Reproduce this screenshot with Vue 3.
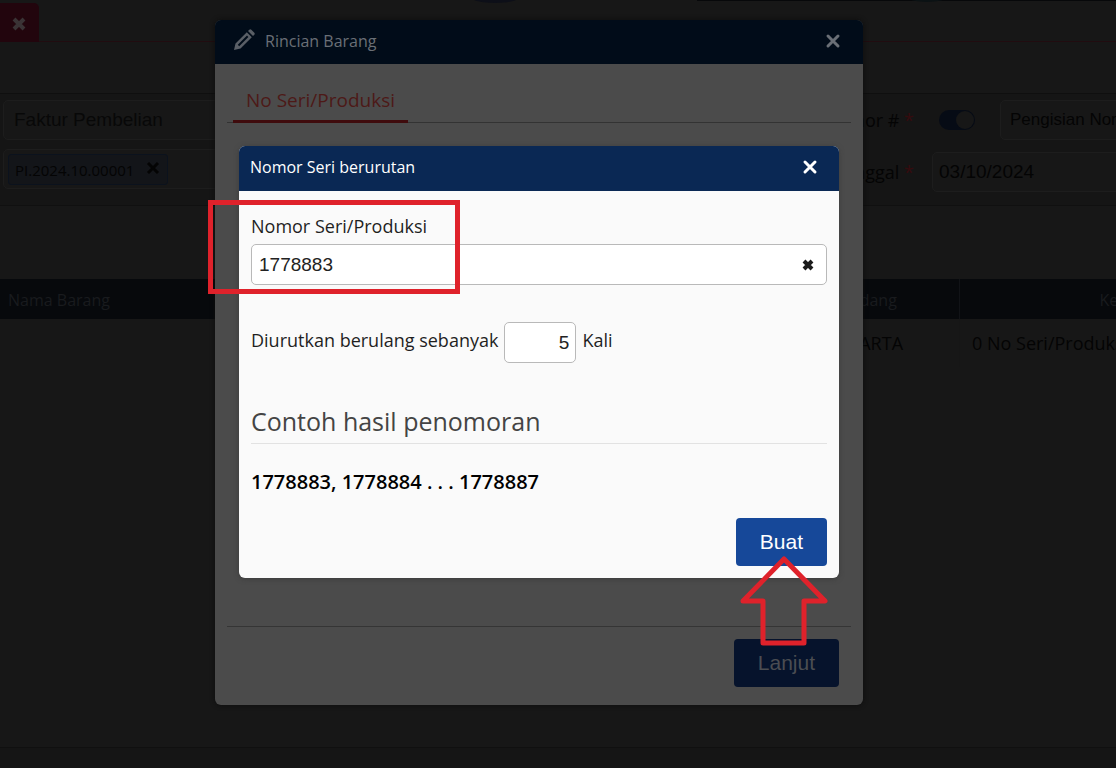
<script setup>
import { computed, ref } from 'vue'

const serial = ref('1778883')
const count = ref('5')

const sample = computed(() => {
  const first = Number(serial.value)
  const total = Number(count.value)
  return `${first}, ${first + 1} . . . ${first + total - 1}`
})
</script>

<template>
  <div class="app">
    <div class="page">
      <header class="topbar">
        <svg class="topbar-art" width="645" height="4" viewBox="0 0 645 4" aria-hidden="true">
          <ellipse cx="24" cy="-3" rx="24" ry="6" fill="#0d0f18" />
          <rect x="226" y="0" width="419" height="1" fill="#07080a" />
          <ellipse cx="456" cy="-3" rx="20" ry="5" fill="#0b1214" />
        </svg>
        <button class="page-tab" aria-label="Tutup tab">
          <svg width="16" height="16" viewBox="0 0 16 16"><path d="M3 3l10 10M13 3L3 13" /></svg>
        </button>
      </header>
      <div class="toolbar"></div>
      <section class="form">
        <div class="form-left">
          <input class="field source" aria-label="Faktur Pembelian" placeholder="Faktur Pembelian" />
          <div class="field tags">
            <span class="tag">
              PI.2024.10.00001
              <button aria-label="Hapus PI.2024.10.00001">
                <svg width="16" height="16" viewBox="0 0 16 16"><path d="M3 3l10 10M13 3L3 13" /></svg>
              </button>
            </span>
          </div>
        </div>
        <div class="form-right">
          <div class="form-row">
            <label class="form-label" for="numbering">Nomor # <i>*</i></label>
            <input id="auto" class="switch" type="checkbox" aria-label="Nomor otomatis" checked />
            <input id="numbering" class="field numbering" value="Pengisian Nomor" />
          </div>
          <div class="form-row">
            <label class="form-label" for="date">Tanggal <i>*</i></label>
            <input id="date" class="field date" value="03/10/2024" />
          </div>
        </div>
      </section>
      <section class="items">
        <table>
          <colgroup><col class="c-name" /><col class="c-store" /><col class="c-note" /></colgroup>
          <thead>
            <tr><th class="left">Nama Barang</th><th>Gudang</th><th>Keterangan</th></tr>
          </thead>
          <tbody>
            <tr><td></td><td class="center">JAKARTA</td><td>0 No Seri/Produksi</td></tr>
          </tbody>
        </table>
      </section>
      <footer class="bottombar"></footer>
    </div>

    <div class="layer layer-detail">
      <section class="dialog detail" role="dialog" aria-label="Rincian Barang">
        <header class="detail-head">
          <svg class="pencil" width="22" height="22" viewBox="0 0 22 22" aria-hidden="true">
            <path fill-rule="evenodd" d="M1 21l1.500-6.500L13.800 3.200l5 5L7.500 19.500zM4.800 15.800l1.400 1.400L15.400 8 14 6.600z" />
            <path d="M15 2l1.300-1.300q1-.9 2 0l3 3q.9 1 0 2L20 7z" />
          </svg>
          <h2>Rincian Barang</h2>
          <button class="close" aria-label="Tutup Rincian Barang">
            <svg width="16" height="16" viewBox="0 0 16 16"><path d="M3 3l10 10M13 3L3 13" /></svg>
          </button>
        </header>
        <div class="detail-body">
          <nav class="tabs"><a href="#serial">No Seri/Produksi</a></nav>
        </div>
        <footer class="detail-foot"><button class="btn">Lanjut</button></footer>
      </section>
    </div>

    <div class="layer layer-serial">
      <form class="dialog serial" role="dialog" aria-label="Nomor Seri berurutan" @submit.prevent>
        <header class="serial-head">
          <h2>Nomor Seri berurutan</h2>
          <button type="button" class="close" aria-label="Tutup">
            <svg width="16" height="16" viewBox="0 0 16 16"><path d="M3 3l10 10M13 3L3 13" /></svg>
          </button>
        </header>
        <div class="serial-body">
          <label class="label" for="serial">Nomor Seri/Produksi</label>
          <div class="input-box">
            <input id="serial" v-model="serial" />
            <button type="button" class="clear" aria-label="Kosongkan" @click="serial = ''">
              <svg width="14" height="14" viewBox="0 0 14 14"><path d="M3 3l8 8M11 3l-8 8" /></svg>
            </button>
          </div>
          <div class="repeat">
            <label for="count">Diurutkan berulang sebanyak</label>
            <input id="count" v-model="count" />
            <span>Kali</span>
          </div>
          <h3>Contoh hasil penomoran</h3>
          <p class="sample">{{ sample }}</p>
          <div class="actions"><button class="btn">Buat</button></div>
        </div>
        <div class="mark-box"></div>
        <svg class="mark-arrow" width="90" height="92" viewBox="0 0 90 92" aria-hidden="true">
          <path d="M45 5L86 47H65V89H24V47H4z" />
        </svg>
      </form>
    </div>
  </div>
</template>

<style>
body {
  margin: 0;
  background: #171717;
}
</style>

<style scoped>
* {
  box-sizing: border-box;
}
.app {
  font-family: "Open Sans", "Noto Sans", sans-serif;
  position: relative;
  min-height: 100vh;
  overflow: hidden;
}
button {
  font-family: inherit;
  color: inherit;
  border: 0;
  padding: 0;
  background: none;
  cursor: pointer;
}
input {
  font-family: "Liberation Sans", Arial, sans-serif;
  outline: 0;
  margin: 0;
}
svg {
  display: block;
}
h2, h3, p {
  margin: 0;
  font-weight: 400;
}

/* page behind the dialogs */
.page {
  display: flex;
  flex-direction: column;
  min-height: 100vh;
  background: #171717;
  color: #040404;
}
.topbar {
  position: relative;
  height: 42px;
  padding-top: 3px;
  border-bottom: 1px solid #210c10;
}
.topbar-art {
  position: absolute;
  top: 0;
  right: 0;
}
.page-tab {
  display: flex;
  align-items: center;
  justify-content: center;
  width: 39px;
  height: 39px;
  padding: 2px 2px 0 0;
  border-radius: 0 5px 0 0;
  background: #22050d;
}
.page-tab path {
  stroke: #3a3335;
  stroke-width: 4;
}
.toolbar {
  height: 52px;
  border-bottom: 1px solid #0f0f0f;
}
.form {
  display: flex;
  height: 112px;
  padding-top: 6px;
  background: #151515;
  border-bottom: 1px solid #101010;
}
.form-left {
  flex: 1;
  display: flex;
  flex-direction: column;
  gap: 9px;
  padding-left: 3px;
}
.field {
  height: 40px;
  border: 1px solid #1d1d1d;
  border-radius: 5px;
  background: #171717;
  color: #040404;
  font-size: 19px;
}
.source {
  width: 300px;
  padding: 0 10px;
}
.source::placeholder {
  color: #080808;
  opacity: 1;
}
.tags {
  width: 300px;
  padding: 4px;
}
.tag {
  display: flex;
  align-items: center;
  justify-content: space-between;
  width: 160px;
  height: 31px;
  padding: 0 6px;
  border: 1px solid #0b121d;
  border-radius: 3px;
  background: #131519;
  font-size: 15px;
  white-space: nowrap;
}
.tag button {
  padding-bottom: 4px;
}
.tag path {
  stroke: #040404;
  stroke-width: 3;
}
.form-right {
  width: 300px;
  display: flex;
  flex-direction: column;
  gap: 12px;
}
.form-row {
  display: flex;
  align-items: center;
}
.form-label {
  flex: none;
  width: 98px;
  margin-right: 18px;
  text-align: right;
  font-size: 18px;
  white-space: nowrap;
}
.form-label i {
  color: #350b0e;
  font-style: normal;
}
.switch {
  appearance: none;
  display: flex;
  justify-content: flex-end;
  flex: none;
  width: 36px;
  height: 20px;
  margin: 0 25px 0 7px;
  padding: 1px;
  border-radius: 10px;
  background: #060b15;
}
.switch::before {
  content: "";
  width: 18px;
  height: 18px;
  border-radius: 50%;
  background: #171717;
}
.numbering {
  flex: none;
  width: 180px;
  padding: 0 9px;
  font-size: 17px;
}
.date {
  flex: none;
  width: 240px;
  padding: 0 6px;
}
.items {
  flex: 1;
  padding-top: 73px;
  overflow: hidden;
}
table {
  width: calc(100% + 210px);
  table-layout: fixed;
  border-collapse: collapse;
}
.c-store {
  width: 184px;
}
.c-note {
  width: 366px;
}
th {
  height: 40px;
  padding: 2px 8px 0;
  background: #07090c;
  border-right: 1px solid #111317;
  color: #191b1e;
  font-size: 16px;
  font-weight: 400;
}
td {
  height: 48px;
  padding: 0 12px;
  border-right: 1px solid #161616;
  font-size: 18px;
}
.left {
  text-align: left;
}
.center {
  text-align: center;
}
.bottombar {
  height: 21px;
  background: #151515;
  border-top: 1px solid #101010;
}

/* dialogs */
.layer {
  position: absolute;
  inset: 0;
  display: flex;
  justify-content: center;
  align-items: flex-start;
}
.layer-detail {
  padding: 20px 38px 0 0;
}
.layer-serial {
  padding: 146px 38px 0 0;
}
.dialog {
  position: relative;
  border-radius: 6px;
}
.close path {
  stroke: currentColor;
  stroke-width: 3;
  stroke-linecap: round;
}
.detail {
  width: 648px;
  background: #4b4b4b;
  box-shadow: 0 0 5px #0c0c0c;
}
.detail-head,
.serial-head {
  display: flex;
  align-items: center;
  border-radius: 6px 6px 0 0;
}
.detail-head {
  height: 44px;
  padding: 0 22px 3px 18px;
  background: #010c19;
  color: #6a6f76;
}
.detail-head h2,
.serial-head h2 {
  flex: 1;
  font-size: 16px;
}
.pencil {
  margin: 0 10px 2px 0;
}
.pencil path {
  fill: #5a5f66;
}
.detail-body {
  height: 562px;
  padding: 17px 12px 0;
}
.tabs {
  display: flex;
  height: 42px;
  padding-left: 6px;
  border-bottom: 1px solid #333;
}
.tabs a {
  height: 42px;
  padding: 0 13px;
  border-bottom: 3px solid #3f0b0d;
  color: #4d1917;
  font-size: 19px;
  line-height: 39px;
  text-decoration: none;
}
.detail-foot {
  display: flex;
  justify-content: flex-end;
  margin: 0 12px;
  padding: 12px 12px 18px;
  border-top: 1px solid #353535;
}
.btn {
  height: 48px;
  padding: 0 24px;
  border-radius: 4px;
  background: #164899;
  color: #fff;
  font-family: "Liberation Sans", Arial, sans-serif;
  font-size: 21px;
}
.detail-foot .btn {
  background: #06132c;
  color: #4b4d52;
}
.serial {
  width: 600px;
  background: #fafafa;
  color: #1f1f1f;
  box-shadow: 0 1px 5px #3c3c3c;
}
.serial-head {
  height: 45px;
  padding: 0 21px 4px 11px;
  background: #0a2854;
  color: #fff;
}
.serial-body {
  display: flex;
  flex-direction: column;
  padding: 23px 12px 12px;
}
.label {
  font-size: 18px;
  line-height: 24px;
  margin-bottom: 6px;
}
.input-box {
  display: flex;
  align-items: center;
  height: 41px;
  padding: 0 11px 0 7px;
  border: 1px solid #b9b9b9;
  border-radius: 5px;
  background: #fff;
}
.input-box input {
  flex: 1;
  min-width: 0;
  padding: 0;
  border: 0;
  background: none;
  color: #222;
  font-size: 19px;
}
.clear path {
  stroke: #1b1b1b;
  stroke-width: 4;
  stroke-linecap: butt;
}
.repeat {
  display: flex;
  align-items: center;
  gap: 6px;
  margin-top: 37px;
  font-size: 18px;
}
.repeat label,
.repeat span {
  padding-bottom: 5px;
}
.repeat input {
  width: 72px;
  height: 41px;
  padding: 0 6px;
  border: 1px solid #b9b9b9;
  border-radius: 5px;
  background: #fff;
  color: #222;
  font-size: 19px;
  text-align: right;
}
h3 {
  margin-top: 41px;
  padding-bottom: 5px;
  border-bottom: 1px solid #e2e2e2;
  color: #444;
  font-size: 25px;
  line-height: 34px;
}
.sample {
  margin-top: 24px;
  color: #000;
  font-size: 20px;
  font-weight: 600;
  line-height: 28px;
}
.actions {
  display: flex;
  justify-content: flex-end;
  margin-top: 22px;
}

/* highlight marks */
.mark-box {
  position: absolute;
  left: -31px;
  top: 54px;
  width: 252px;
  height: 94px;
  border: 5px solid #df222b;
  pointer-events: none;
}
.mark-arrow {
  position: absolute;
  right: 10px;
  top: 408px;
  pointer-events: none;
}
.mark-arrow path {
  fill: none;
  stroke: #df222b;
  stroke-width: 5;
  stroke-linejoin: round;
}
</style>
